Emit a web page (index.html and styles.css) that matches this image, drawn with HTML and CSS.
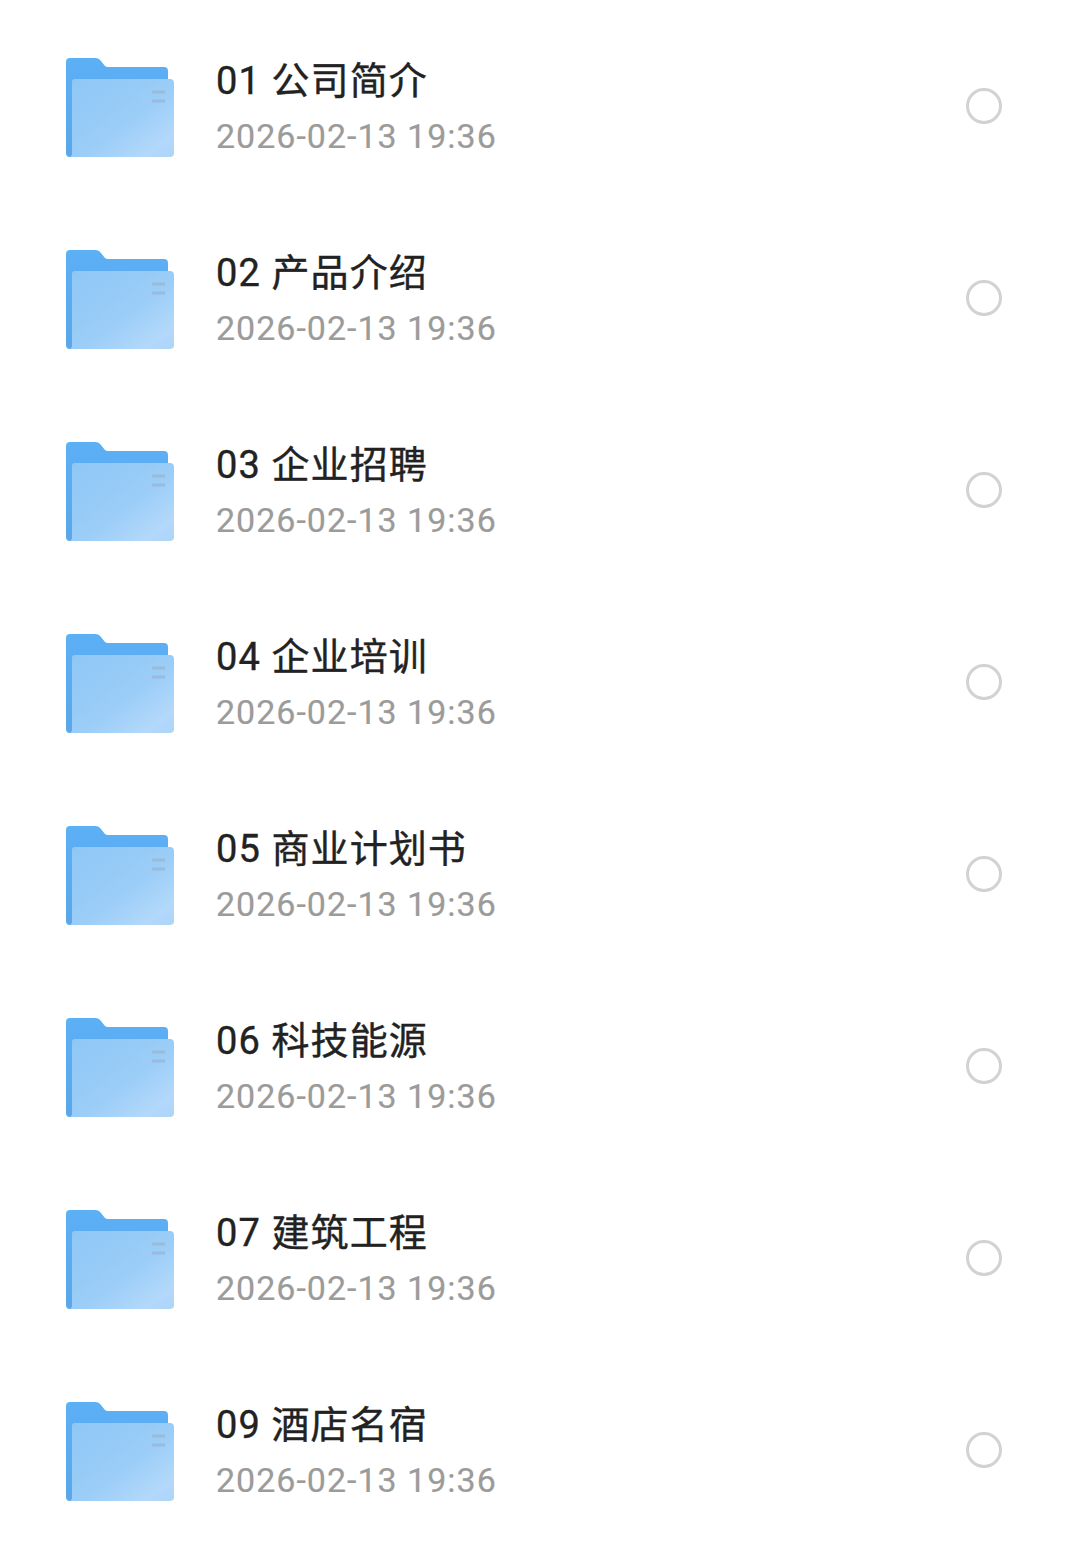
FILE: index.html
```html
<!DOCTYPE html>
<html>
<head lang="en">
    <meta charset="UTF-8">
    <title>文件夹</title>
    <link rel="stylesheet" href="styles.css">
</head>
<body>
<svg class="defs" width="0" height="0">
    <defs>
        <linearGradient id="front" x1="0" y1="0" x2="1" y2="1">
            <stop offset="0" stop-color="#8ec7f6"/>
            <stop offset="0.55" stop-color="#9bcdf7"/>
            <stop offset="0.85" stop-color="#b2d8fb"/>
            <stop offset="1" stop-color="#aed5f8"/>
        </linearGradient>
        <linearGradient id="back" x1="0" y1="0" x2="0" y2="1">
            <stop offset="0" stop-color="#5cb0f5"/>
            <stop offset="1" stop-color="#5aa6ea"/>
        </linearGradient>
        <symbol id="folder" viewBox="0 0 108 99">
            <path d="M0 4Q0 0 4 0H29Q33 0 35 3L39 8Q40 9 42 9H98Q102 9 102 13V99H4Q0 99 0 95Z" fill="url(#back)"/>
            <path d="M6 24Q6 21 9 21H104Q108 21 108 25V95Q108 99 104 99H3Q6 99 6 95Z" fill="url(#front)"/>
            <path d="M86 34H99M86 43H99" stroke="#9cbbdb" stroke-width="3" fill="none"/>
        </symbol>
    </defs>
</svg>
<ul class="file-list">
    <li class="file-row">
        <svg class="folder-icon"><use href="#folder"/></svg>
        <div class="file-info"><div class="file-name">01 公司简介</div><div class="file-date">2026-02-13 19:36</div></div>
        <span class="radio"></span>
    </li>
    <li class="file-row">
        <svg class="folder-icon"><use href="#folder"/></svg>
        <div class="file-info"><div class="file-name">02 产品介绍</div><div class="file-date">2026-02-13 19:36</div></div>
        <span class="radio"></span>
    </li>
    <li class="file-row">
        <svg class="folder-icon"><use href="#folder"/></svg>
        <div class="file-info"><div class="file-name">03 企业招聘</div><div class="file-date">2026-02-13 19:36</div></div>
        <span class="radio"></span>
    </li>
    <li class="file-row">
        <svg class="folder-icon"><use href="#folder"/></svg>
        <div class="file-info"><div class="file-name">04 企业培训</div><div class="file-date">2026-02-13 19:36</div></div>
        <span class="radio"></span>
    </li>
    <li class="file-row">
        <svg class="folder-icon"><use href="#folder"/></svg>
        <div class="file-info"><div class="file-name">05 商业计划书</div><div class="file-date">2026-02-13 19:36</div></div>
        <span class="radio"></span>
    </li>
    <li class="file-row">
        <svg class="folder-icon"><use href="#folder"/></svg>
        <div class="file-info"><div class="file-name">06 科技能源</div><div class="file-date">2026-02-13 19:36</div></div>
        <span class="radio"></span>
    </li>
    <li class="file-row">
        <svg class="folder-icon"><use href="#folder"/></svg>
        <div class="file-info"><div class="file-name">07 建筑工程</div><div class="file-date">2026-02-13 19:36</div></div>
        <span class="radio"></span>
    </li>
    <li class="file-row">
        <svg class="folder-icon"><use href="#folder"/></svg>
        <div class="file-info"><div class="file-name">09 酒店名宿</div><div class="file-date">2026-02-13 19:36</div></div>
        <span class="radio"></span>
    </li>
</ul>
</body>
</html>
```

FILE: styles.css
```css
* {
    margin: 0;
    padding: 0;
}

ul {
    list-style: none;
}

body {
    background-color: #fff;
    font-family: Roboto, "Noto Sans CJK SC", sans-serif;
}

.defs {
    display: block;
}

.file-list {
    padding-top: 10px;
}

.file-row {
    height: 192px;
    display: flex;
    align-items: center;
    padding: 0 78px 0 66px;
}

.folder-icon {
    width: 108px;
    height: 99px;
    margin-top: 3px;
    flex: none;
}

.file-info {
    flex: 1;
    margin-left: 42px;
    padding-top: 2px;
}

.file-name {
    font-size: 38px;
    line-height: 50px;
    letter-spacing: 1.1px;
    color: #222;
    -webkit-text-stroke: 0.4px #222;
}

.file-date {
    font-size: 34px;
    line-height: 46px;
    margin-top: 7px;
    letter-spacing: 1px;
    color: #9b9b9b;
    -webkit-text-stroke: 0.2px #9b9b9b;
}

.radio {
    width: 36px;
    height: 36px;
    box-sizing: border-box;
    border: 3.5px solid #d2d2d2;
    border-radius: 50%;
    flex: none;
}
```
